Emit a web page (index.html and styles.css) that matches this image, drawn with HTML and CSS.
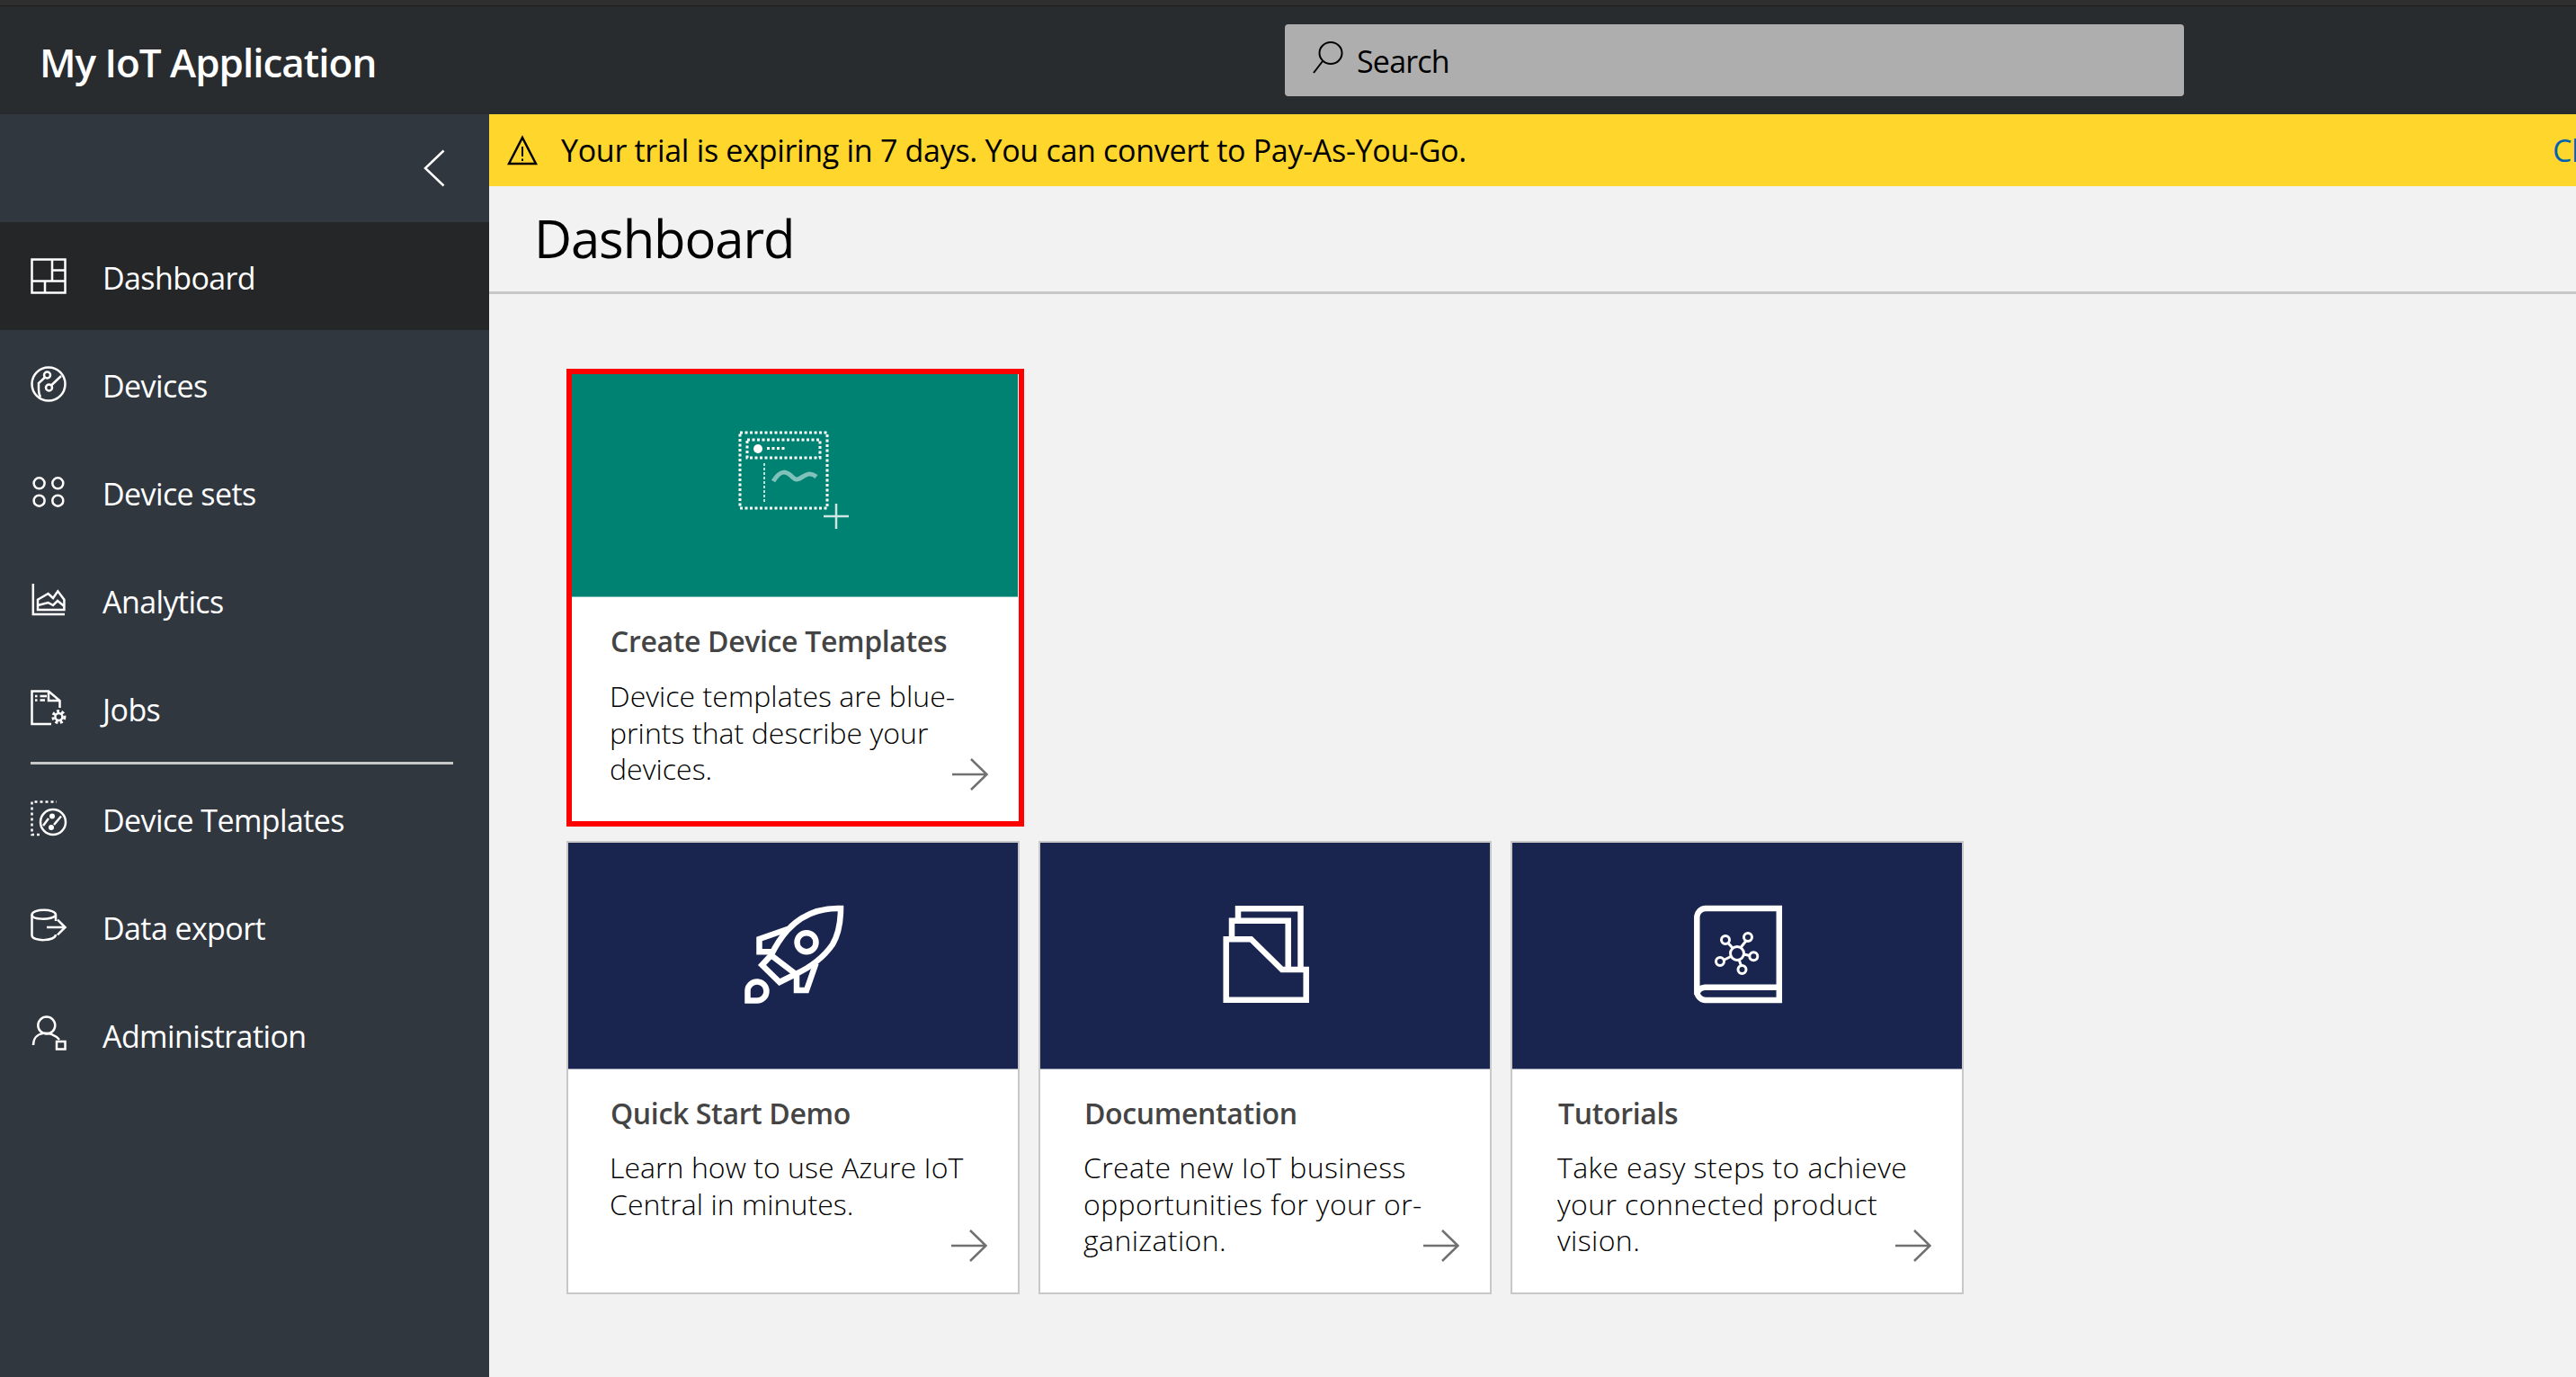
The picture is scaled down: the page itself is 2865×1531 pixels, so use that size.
FILE: index.html
```html
<!DOCTYPE html>
<html>
<head>
    <title>My IoT Application</title>
    <link rel="stylesheet" href="styles.css">
</head>
<body>
    <div class="top-strip"></div>
    <header class="app-header">
        <div class="app-title">My IoT Application</div>
        <div class="search-box">
            <svg class="search-icon" width="36" height="38" viewBox="0 0 36 38">
                <ellipse cx="21" cy="14" rx="12.5" ry="12" fill="none" stroke="#000" stroke-width="2"/>
                <path d="M12 23 L2 36" fill="none" stroke="#000" stroke-width="2"/>
            </svg>
            <span>Search</span>
        </div>
    </header>

    <div class="app-body">
        <nav class="sidebar">
            <div class="collapse-row">
                <svg width="24" height="42" viewBox="0 0 24 42">
                    <path d="M22.5 1.5 L2 21 L22.5 40.5" fill="none" stroke="#fff" stroke-width="2.5"/>
                </svg>
            </div>

            <a class="nav-item active">
                <svg class="nav-icon" viewBox="0 0 44 44">
                    <path d="M3.5 3.5 H40.5 V40.5 H3.5 Z M26 3.5 V27.5 M3.5 27.5 H40.5 M26 15.5 H40.5 M18 27.5 V40.5"/>
                </svg>
                <span>Dashboard</span>
            </a>
            <a class="nav-item">
                <svg class="nav-icon" viewBox="0 0 44 44">
                    <circle cx="22" cy="22" r="18.5"/>
                    <circle cx="20.5" cy="12" r="3.5"/>
                    <circle cx="22.5" cy="26" r="3.5"/>
                    <path d="M25 23.5 L36 13 M18 14.5 L11 21 V28 Q11 33 13 36.500"/>
                </svg>
                <span>Devices</span>
            </a>
            <a class="nav-item">
                <svg class="nav-icon" viewBox="0 0 44 44">
                    <circle cx="11.600" cy="12.300" r="6"/>
                    <circle cx="32.300" cy="12.300" r="6"/>
                    <circle cx="11.600" cy="31.700" r="6"/>
                    <circle cx="32.300" cy="31.700" r="6"/>
                </svg>
                <span>Device sets</span>
            </a>
            <a class="nav-item">
                <svg class="nav-icon" viewBox="0 0 44 44">
                    <path d="M4.800 4 V38 H40"/>
                    <path d="M10 33 V21.700 L21.600 15 L27 20 L32.300 12.300 L39.400 21.700 V33 Z"/>
                    <path d="M10 28 L21.600 25 L27 28 L32 23 L39.400 29"/>
                </svg>
                <span>Analytics</span>
            </a>
            <a class="nav-item">
                <svg class="nav-icon" viewBox="0 0 44 44">
                    <path d="M25 40 H3.500 V3.500 H22 L34.500 14 V22 M22 3.500 V14 H34.500"/>
                    <path d="M7 9 H9.500 M12.500 9 H20 M7 13.500 H9.500 M12.500 13.500 H18"/>
                    <circle cx="33.400" cy="32" r="4"/>
                    <circle class="gear-teeth" cx="33.400" cy="32" r="6.500"/>
                </svg>
                <span>Jobs</span>
            </a>

            <div class="nav-divider"></div>

            <a class="nav-item">
                <svg class="nav-icon" viewBox="0 0 44 44">
                    <path class="dotted" d="M12 40 H3.500 V3.500 H31"/>
                    <circle cx="27" cy="26" r="14"/>
                    <circle class="solid" cx="26" cy="19.500" r="3"/>
                    <circle class="solid" cx="25" cy="32" r="3"/>
                    <path d="M22 22 L16 30 M28 29 L36 19.500"/>
                </svg>
                <span>Device Templates</span>
            </a>
            <a class="nav-item">
                <svg class="nav-icon" viewBox="0 0 44 44">
                    <path d="M30 16 V9 C30 2 3.500 2 3.500 9 V32 C3.500 39 30 39 30 31"/>
                    <path d="M3.500 9 C3.500 15 24 15 30 10"/>
                    <path d="M20 23 H40 M32 14.700 L40.500 23 L32 31.300"/>
                </svg>
                <span>Data export</span>
            </a>
            <a class="nav-item">
                <svg class="nav-icon" viewBox="0 0 44 44">
                    <circle cx="19.800" cy="12" r="9.500"/>
                    <path d="M5 34 C5 18 25 17 34 28"/>
                    <rect x="31" y="30" width="9.500" height="8.500"/>
                </svg>
                <span>Administration</span>
            </a>
        </nav>

        <main class="main">
            <div class="trial-banner">
                <svg class="warning-icon" width="34" height="34" viewBox="0 0 34 34">
                    <path d="M17 3 L32 32 H2 Z" fill="none" stroke="#000" stroke-width="2.500"/>
                    <path d="M17 13 V24 M17 26.500 V29" stroke="#000" stroke-width="2"/>
                </svg>
                <span class="trial-text">Your trial is expiring in 7 days. You can convert to Pay-As-You-Go.</span>
                <a class="trial-link">Cl</a>
            </div>
            <h1 class="page-title">Dashboard</h1>

            <div class="tiles">
                <div class="tile-row">
                    <div class="tile tile-selected">
                        <div class="tile-art tile-art-teal">
                            <svg class="art" viewBox="0 0 130 130">
                                <rect class="dots-big" x="4" y="6" width="97" height="84"/>
                                <rect class="dots-big" x="12" y="14" width="81" height="20"/>
                                <circle cx="24" cy="24" r="5" fill="#fff"/>
                                <path class="dots-big" d="M34 23.500 H56"/>
                                <path class="dots-thin" d="M31 40 V83"/>
                                <path d="M41 60 C50 46 56 49 63 56 C71 64 76 45 89 55" fill="none" stroke="#fff" stroke-opacity=".5" stroke-width="5"/>
                                <path d="M97 99 H125 M111 85 V113" fill="none" stroke="#fff" stroke-opacity=".8" stroke-width="2.500"/>
                            </svg>
                        </div>
                        <div class="tile-body">
                            <h3>Create Device Templates</h3>
                            <p>Device templates are blue-<br>prints that describe your<br>devices.</p>
                            <svg class="tile-arrow" width="40" height="36" viewBox="0 0 40 36">
                                <path d="M0 18 H38 M21 1 L38.500 18 L21 35"/>
                            </svg>
                        </div>
                    </div>
                </div>

                <div class="tile-row">
                    <div class="tile">
                        <div class="tile-art">
                            <svg class="art art-line" viewBox="0 0 130 130">
                                <path d="M118 12 C90 11 72 22 59 36 C50 46 45 55 40.600 64 L68 85 C85 77 100 65 109 52 C116 40 118 28 118 12 Z"/>
                                <circle cx="80" cy="49.700" r="10.500"/>
                                <path d="M59 35 L27.500 46 V60.300 H41"/>
                                <path d="M90.500 73 L80 103 H69 V86"/>
                                <path d="M42.500 62 L30.500 75 L50 94 L68 85"/>
                                <path d="M14.500 114.500 V103 A10.500 10.500 0 1 1 25 114.500 Z"/>
                            </svg>
                        </div>
                        <div class="tile-body">
                            <h3>Quick Start Demo</h3>
                            <p>Learn how to use Azure IoT<br>Central in minutes.</p>
                            <svg class="tile-arrow" width="40" height="36" viewBox="0 0 40 36">
                                <path d="M0 18 H38 M21 1 L38.500 18 L21 35"/>
                            </svg>
                        </div>
                    </div>

                    <div class="tile">
                        <div class="tile-art">
                            <svg class="art art-line art-square" viewBox="0 0 130 130">
                                <path d="M21.700 46.300 H49.400 L83.800 80 H110.700 V113.700 H21.700 Z"/>
                                <path d="M28 46 V25.700 H90.700 V80"/>
                                <path d="M35 26 V12.300 H104.500 V80"/>
                            </svg>
                        </div>
                        <div class="tile-body">
                            <h3>Documentation</h3>
                            <p>Create new IoT business<br>opportunities for your or-<br>ganization.</p>
                            <svg class="tile-arrow" width="40" height="36" viewBox="0 0 40 36">
                                <path d="M0 18 H38 M21 1 L38.500 18 L21 35"/>
                            </svg>
                        </div>
                    </div>

                    <div class="tile">
                        <div class="tile-art">
                            <svg class="art art-line" viewBox="0 0 130 130">
                                <path d="M111.800 12 H30 A10 10 0 0 0 20.300 22 V104 A10 10 0 0 0 30 114 H111.800 Z"/>
                                <path d="M20.300 108 A9 9 0 0 1 29 99.700 H111.800"/>
                                <g class="hub">
                                    <circle cx="65" cy="62" r="7.500"/>
                                    <circle cx="52" cy="47" r="4.500"/>
                                    <circle cx="77" cy="44" r="4.500"/>
                                    <circle cx="83.300" cy="65.300" r="4.500"/>
                                    <circle cx="70.500" cy="80" r="4.500"/>
                                    <circle cx="46" cy="71" r="4.500"/>
                                    <path d="M60 56 L55 50.500 M69 55.500 L75 48 M72.500 63 L79 64.500 M67 69 L69.500 75.500 M58 65.500 L50 69.500"/>
                                </g>
                            </svg>
                        </div>
                        <div class="tile-body">
                            <h3>Tutorials</h3>
                            <p>Take easy steps to achieve<br>your connected product<br>vision.</p>
                            <svg class="tile-arrow" width="40" height="36" viewBox="0 0 40 36">
                                <path d="M0 18 H38 M21 1 L38.500 18 L21 35"/>
                            </svg>
                        </div>
                    </div>
                </div>
            </div>
        </main>
    </div>
</body>
</html>
```

FILE: styles.css
```css
/* Basic layout */
* {
    box-sizing: border-box;
}

html, body {
    height: 100%;
}

body {
    margin: 0;
    display: flex;
    flex-direction: column;
    overflow: hidden;
    font-family: "Open Sans", "Noto Sans", sans-serif;
    background-color: #f2f2f2;
    color: #000;
}

/* Header */
.top-strip {
    height: 7px;
    background-color: #2f2f2f;
    border-bottom: 1px solid #1e1e1e;
}

.app-header {
    height: 120px;
    flex-shrink: 0;
    display: flex;
    align-items: center;
    background-color: #292c2f;
}

.app-title {
    width: 1429px;
    padding: 4px 0 0 44px;
    color: #fff;
    font-size: 44px;
    font-weight: 600;
    letter-spacing: -1px;
}

.search-box {
    width: 1000px;
    height: 80px;
    display: flex;
    align-items: center;
    gap: 14px;
    padding: 0 0 0 30px;
    background-color: #aeaeae;
    border-radius: 4px;
    font-size: 34px;
    letter-spacing: -0.8px;
}

.search-box span {
    margin-top: 2px;
}

.search-icon {
    margin-bottom: 6px;
}

/* Body */
.app-body {
    flex: 1;
    display: flex;
    min-height: 0;
}

.sidebar {
    width: 544px;
    flex-shrink: 0;
    background-color: #31373f;
}

.collapse-row {
    height: 120px;
    display: flex;
    align-items: center;
    justify-content: flex-end;
    padding-right: 49px;
}

.nav-item {
    height: 120px;
    display: flex;
    align-items: center;
    gap: 38px;
    padding-left: 32px;
    color: #fff;
    font-size: 34px;
    letter-spacing: -0.6px;
}

.nav-item.active {
    background-color: #252628;
}

.nav-item span {
    margin-top: 3px;
}

.nav-icon {
    width: 44px;
    height: 44px;
    flex-shrink: 0;
    fill: none;
    stroke: #fff;
    stroke-width: 2.5;
}

.nav-icon .gear-teeth {
    stroke-width: 3;
    stroke-dasharray: 3 2.500;
}

.nav-icon .dotted {
    stroke-dasharray: 3 3;
}

.nav-icon .solid {
    fill: #fff;
    stroke: none;
}

.nav-divider {
    height: 3px;
    margin: 0 40px 0 34px;
    background-color: #c8c8c8;
}

/* Main */
.main {
    flex: 1;
    min-width: 0;
    overflow: hidden;
}

.trial-banner {
    height: 80px;
    display: flex;
    align-items: center;
    padding-left: 20px;
    background-color: #ffd62b;
    font-size: 34px;
    letter-spacing: -0.3px;
    position: relative;
}

.warning-icon {
    margin-right: 26px;
}

.trial-link {
    position: absolute;
    left: 2295px;
    white-space: nowrap;
    color: #0063b1;
}

.page-title {
    height: 120px;
    margin: 0;
    padding: 23px 0 0 50px;
    border-bottom: 3px solid #c8c8c8;
    font-size: 58px;
    font-weight: 400;
    letter-spacing: -1.1px;
    line-height: 70px;
}

.tiles {
    display: flex;
    flex-direction: column;
    gap: 16px;
    padding: 83px 0 0 86px;
}

.tile-row {
    display: flex;
    gap: 21px;
}

.tile {
    width: 504px;
    height: 504px;
    display: flex;
    flex-direction: column;
    background-color: #fff;
    border: 2px solid #c8c8c8;
}

.tile-selected {
    width: 509px;
    height: 509px;
    border: 6px solid #f00;
}

.tile-art {
    height: 252px;
    flex-shrink: 0;
    display: flex;
    align-items: center;
    justify-content: center;
    background-color: #19244f;
    border-bottom: 1px solid #8a90a8;
}

.tile-art-teal {
    height: 248px;
    margin-right: 1px;
    background-color: #008272;
    border-bottom-color: #6fb9ae;
}

.art {
    width: 130px;
    height: 130px;
}

.art-line {
    fill: none;
    stroke: #fff;
    stroke-width: 6.5;
}

.art-line .hub {
    stroke-width: 3;
}

.dots-big {
    fill: none;
    stroke: #fff;
    stroke-width: 3;
    stroke-dasharray: 3 2.500;
}

.dots-thin {
    fill: none;
    stroke: #fff;
    stroke-width: 1.500;
    stroke-dasharray: 3 2;
}

.tile-body {
    flex: 1;
    position: relative;
    padding: 29px 0 0 47px;
}

.tile-selected .tile-body {
    padding-left: 43px;
}

.tile:nth-child(2) .tile-body {
    padding-left: 49px;
}

.tile:nth-child(3) .tile-body {
    padding-left: 51px;
}

.tile:nth-child(2) p,
.tile:nth-child(3) p {
    letter-spacing: 0.4px;
}

.tile-body h3 {
    margin: 0 0 20px;
    color: #444;
    font-size: 32px;
    font-weight: 600;
    line-height: 40px;
    letter-spacing: -0.35px;
}

.tile-selected h3 {
    margin-bottom: 21px;
}

.tile-body p {
    margin: 0 0 0 -1px;
    color: #000;
    font-size: 32px;
    font-weight: 300;
    line-height: 40.500px;
    letter-spacing: 0.05px;
    white-space: nowrap;
}

.tile-arrow {
    position: absolute;
    right: 34px;
    bottom: 34px;
    fill: none;
    stroke: #707070;
    stroke-width: 2.500;
}
```
